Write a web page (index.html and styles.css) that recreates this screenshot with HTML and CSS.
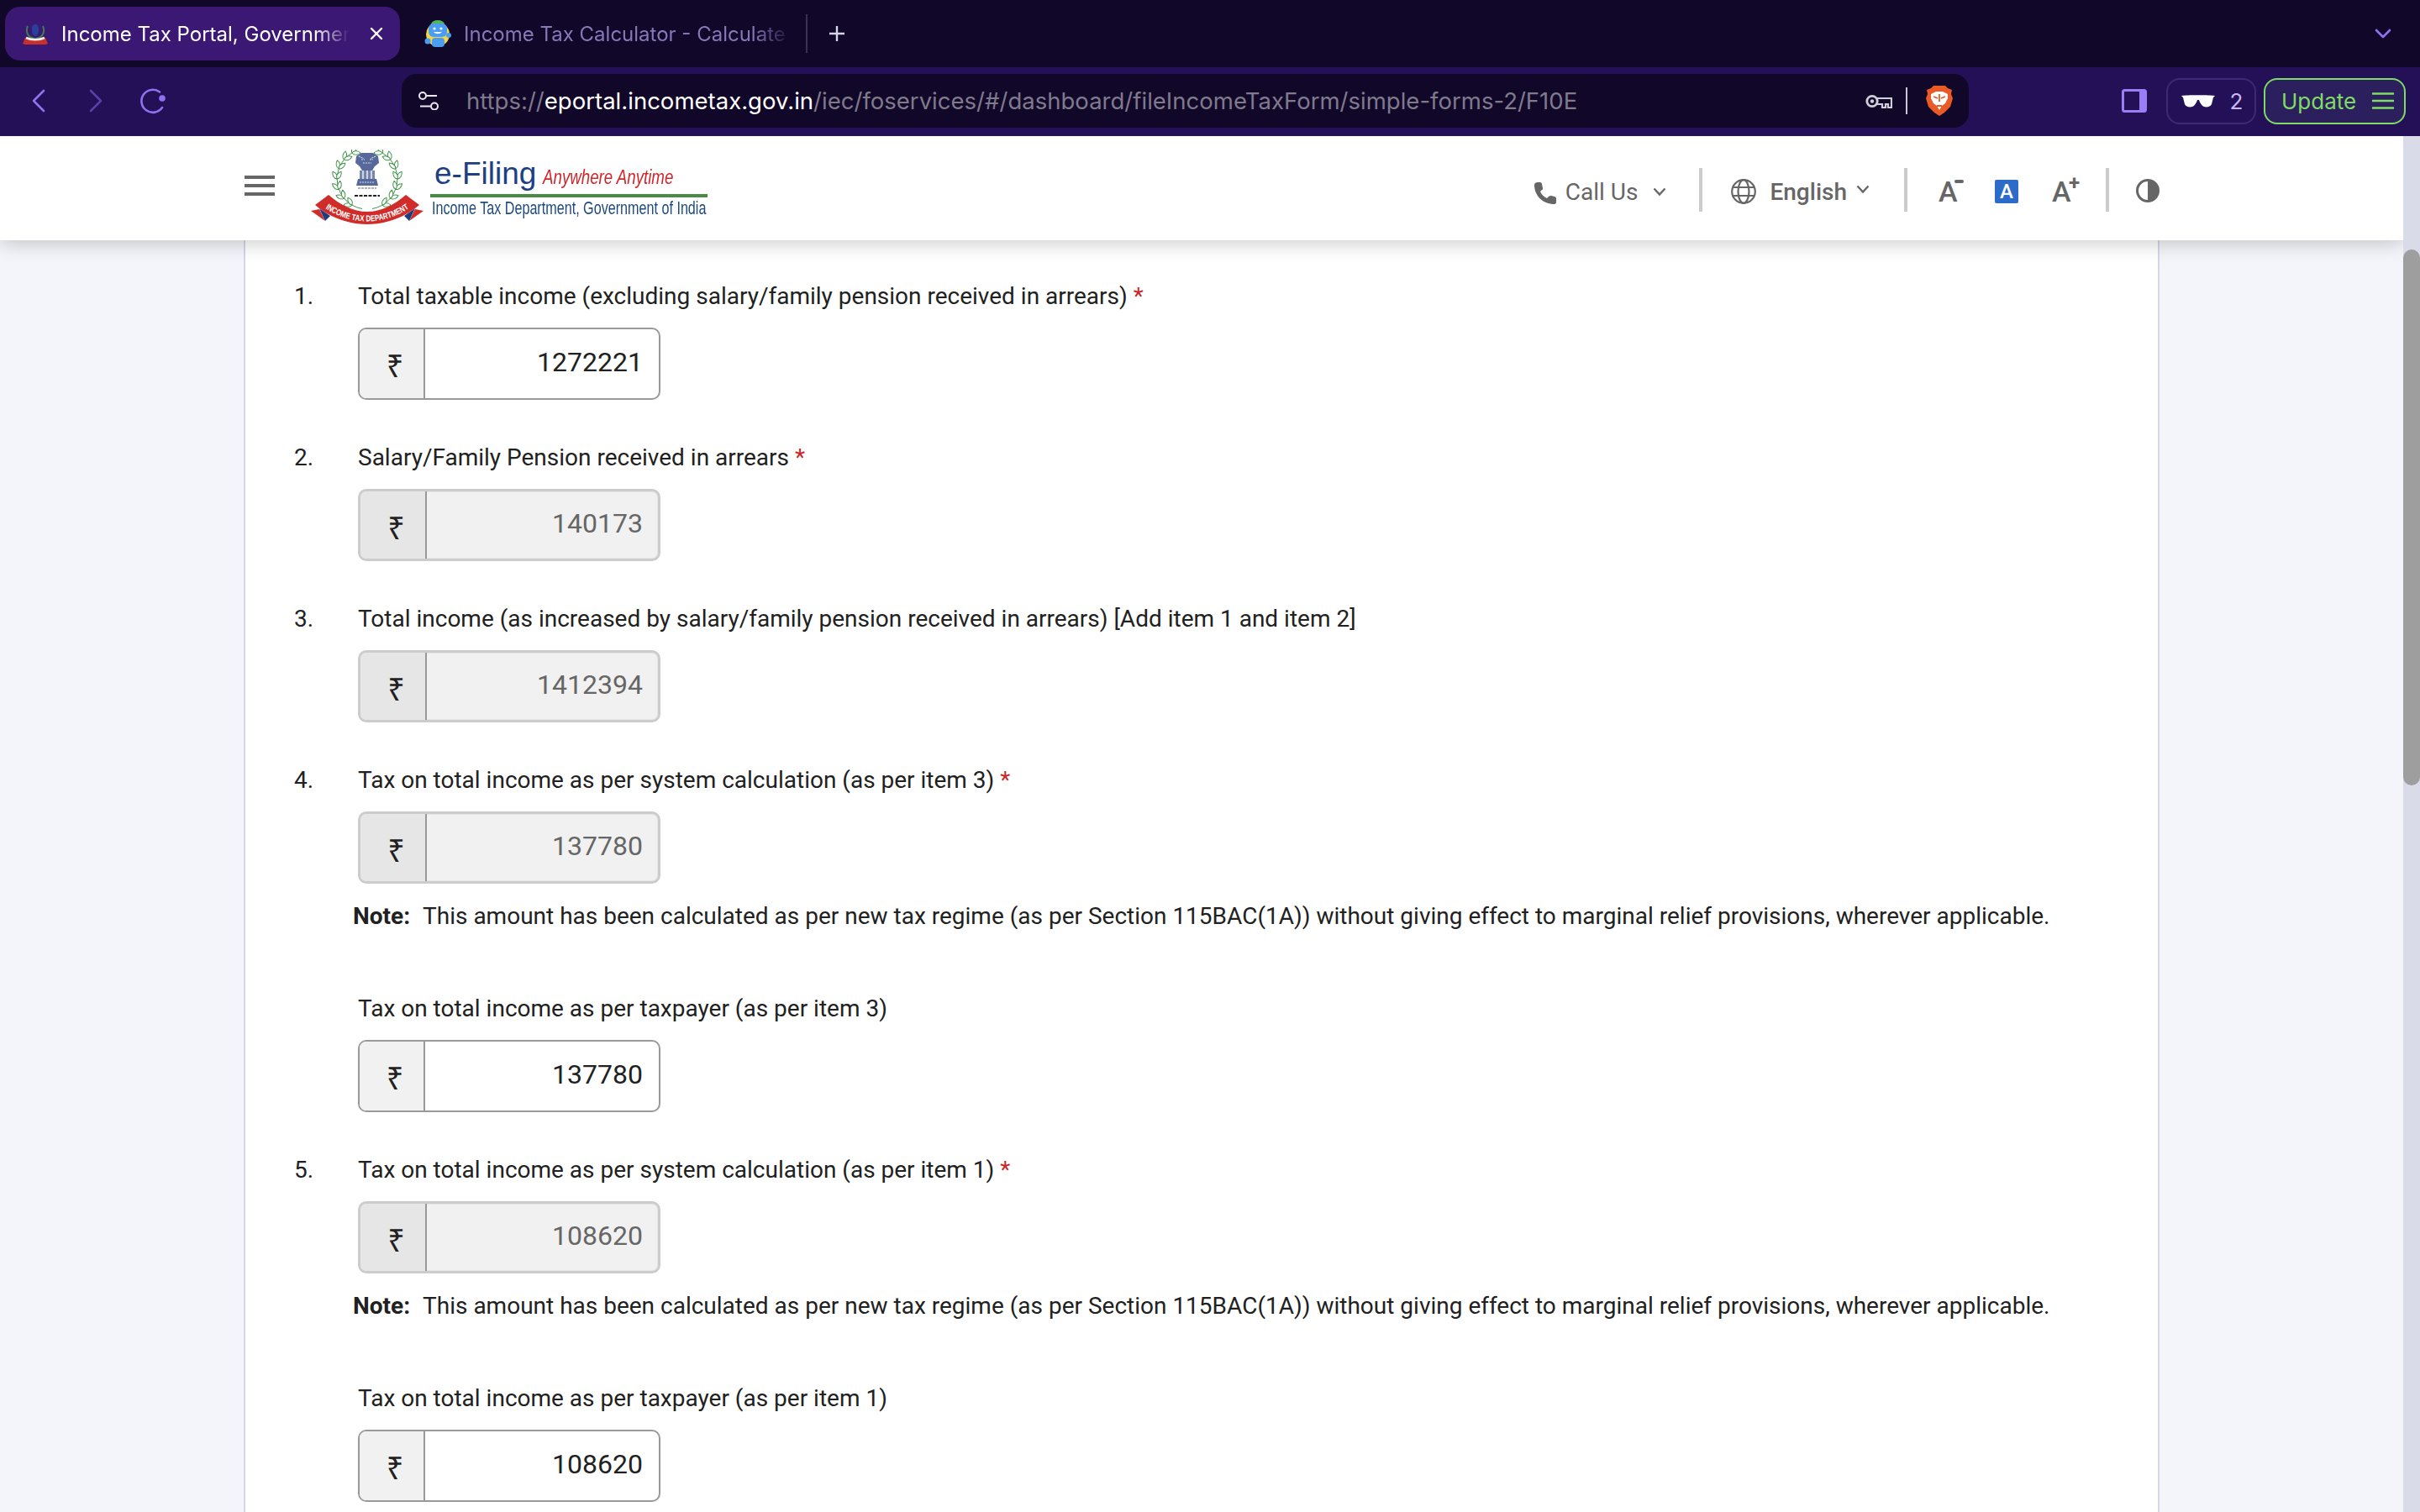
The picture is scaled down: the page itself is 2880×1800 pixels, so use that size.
FILE: index.html
```html
<!DOCTYPE html>
<html lang="en">
<head>
<meta charset="utf-8">
<title>Income Tax Portal</title>
<link rel="stylesheet" href="styles.css">
</head>
<body>
<div class="tabstrip">
  <div class="tab tab-active">
    <svg class="favicon" viewBox="0 0 30 25"><path d="M6 3C3 10 6 17 15 18c9-1 12-8 9-15" fill="none" stroke="#3d7d52" stroke-width="2"/><path d="M15 1c-3 0-4 2-4 6s1 8 4 8 4-4 4-8-1-6-4-6z" fill="#2a3f9a"/><path d="M3 17c6 4 18 4 24 0l3 7-3 1c-8 2-16 2-24 0l-3-1z" fill="#c8302c"/><path d="M4 17c6 3 16 3 22 0" stroke="#f4eeee" stroke-width="2.600" fill="none"/></svg>
    <span class="tab-title">Income Tax Portal, Government of India</span>
    <svg class="tab-close" viewBox="0 0 16 16"><path d="M2 2l12 12M14 2L2 14" stroke="#fff" stroke-width="2.400" stroke-linecap="round"/></svg>
  </div>
  <div class="tab tab-idle">
    <svg class="favicon favicon-robot" viewBox="0 0 32 32"><circle cx="16" cy="17" r="14" fill="#f3d54a"/><ellipse cx="16" cy="5" rx="8" ry="5" fill="#4cb85a"/><rect x="5" y="4" width="22" height="16" rx="6" fill="#4a9df0"/><circle cx="12" cy="10" r="1.600" fill="#fff"/><circle cx="20" cy="10" r="1.600" fill="#fff"/><path d="M11 14c3 3 7 3 10 0z" fill="#fff"/><rect x="9" y="21" width="15" height="11" rx="4" fill="#4a9df0"/><circle cx="4" cy="25" r="3.500" fill="#4a9df0"/><circle cx="29" cy="18" r="3" fill="#4a9df0"/></svg>
    <span class="tab-title">Income Tax Calculator - Calculate your tax</span>
  </div>
  <div class="tab-sep"></div>
  <svg class="tab-new" viewBox="0 0 20 20"><path d="M10 1v18M1 10h18" stroke="#d8d4ea" stroke-width="2.400"/></svg>
  <svg class="tab-more" viewBox="0 0 20 12"><path d="M2 2l8 8 8-8" fill="none" stroke="#8f72f0" stroke-width="2.600" stroke-linecap="round" stroke-linejoin="round"/></svg>
</div>

<div class="toolbar">
  <div class="nav-buttons">
    <svg class="nav-icon" viewBox="0 0 16 28"><path d="M14 2L2 14l12 12" fill="none" stroke="#8f72f0" stroke-width="2.600" stroke-linecap="round" stroke-linejoin="round"/></svg>
    <svg class="nav-icon nav-dim" viewBox="0 0 16 28"><path d="M2 2l12 12L2 26" fill="none" stroke="#5b3fa8" stroke-width="2.600" stroke-linecap="round" stroke-linejoin="round"/></svg>
    <svg class="nav-reload" viewBox="0 0 32 32"><path d="M24 5.500A13.500 13.500 0 1 0 27 24" fill="none" stroke="#8f72f0" stroke-width="2.600" stroke-linecap="round"/><circle cx="27" cy="13" r="3.800" fill="#8f72f0"/></svg>
  </div>
  <div class="urlbar">
    <svg class="url-tune" viewBox="0 0 24 22"><circle cx="5" cy="5" r="4" fill="none" stroke="#ece9f4" stroke-width="2"/><path d="M9.500 5H22M2 17.500h12" stroke="#ece9f4" stroke-width="2"/><circle cx="19" cy="17.500" r="4" fill="none" stroke="#ece9f4" stroke-width="2"/></svg>
    <div class="url-text"><span class="url-dim">https://</span><span class="url-host">eportal.incometax.gov.in</span><span class="url-dim">/iec/foservices/#/dashboard/fileIncomeTaxForm/simple-forms-2/F10E</span></div>
    <svg class="url-key" viewBox="0 0 32 17"><circle cx="8" cy="8.500" r="6.200" fill="none" stroke="#d0ced8" stroke-width="2.800"/><circle cx="8" cy="8.500" r="2.200" fill="#d0ced8"/><path d="M14 5h17v11h-4v-4h-3v4h-4v-4h-6" fill="none" stroke="#d0ced8" stroke-width="2.200"/></svg>
    <div class="url-sep"></div>
    <svg class="url-brave" viewBox="0 0 32 36"><path d="M9 0h14l3 3 5 2-1 5 2 5-3 10-7 7-6 4-6-4-7-7-3-10 2-5-1-5 5-2z" fill="#ea5a26"/><path d="M6 10l6-3h8l6 3 0 5-3 6-4 3-3 5-3-5-4-3-3-6z" fill="#fff"/><path d="M9 13l5 2M23 13l-5 2M16 10v9M13 24h6" stroke="#ea5a26" stroke-width="1.800" fill="none"/></svg>
  </div>
  <div class="toolbar-right">
    <svg class="side-icon" viewBox="0 0 30 28"><rect x="1.500" y="1.500" width="27" height="25" rx="2" fill="none" stroke="#9b7df5" stroke-width="3"/><rect x="21" y="2" width="8" height="24" fill="#9b7df5"/></svg>
    <div class="wallet-btn">
      <svg class="wallet-glasses" viewBox="0 0 40 15"><path d="M0 1C6 0 34 0 40 1l-2 2-2 8c-1 3-6 4-9 3-3-1-5-5-6-8h-2c-1 3-3 7-6 8-3 1-8 0-9-3L2 3z" fill="#fff"/></svg>
      <span class="wallet-count">2</span>
    </div>
    <div class="update-btn">
      <span class="update-text">Update</span>
      <svg class="update-menu" viewBox="0 0 26 20"><path d="M0 1.500h26M0 10h26M0 18.500h26" stroke="#7fdc62" stroke-width="2.400"/></svg>
    </div>
  </div>
</div>

<div class="viewport">
  <div class="page">
    <header class="site-header">
      <svg class="hamburger" viewBox="0 0 36 24"><path d="M0 2h36M0 12h36M0 22h36" stroke="#666" stroke-width="4"/></svg>
      <div class="logo">
        <svg class="logo-emblem" viewBox="10 8 134 92">
          <defs>
            <path id="leaf" d="M0 0c2-3 7-3 10 0-3 3-8 3-10 0z" fill="#fff" stroke="#3f9448" stroke-width="1"/>
            <g id="wreath">
              <path d="M59 12A36 36 0 0 0 71 78.500" fill="none" stroke="#3f9448" stroke-width="1"/>
              <use href="#leaf" transform="translate(59 12) rotate(-60)"/><use href="#leaf" transform="translate(59 12) rotate(0)"/>
              <use href="#leaf" transform="translate(49.400 19.900) rotate(-80)"/><use href="#leaf" transform="translate(49.400 19.900) rotate(-20)"/>
              <use href="#leaf" transform="translate(43.200 30.700) rotate(-100)"/><use href="#leaf" transform="translate(43.200 30.700) rotate(-40)"/>
              <use href="#leaf" transform="translate(41 43) rotate(-120)"/><use href="#leaf" transform="translate(41 43) rotate(-60)"/>
              <use href="#leaf" transform="translate(43.200 55.300) rotate(-140)"/><use href="#leaf" transform="translate(43.200 55.300) rotate(-80)"/>
              <use href="#leaf" transform="translate(49.400 66.100) rotate(-160)"/><use href="#leaf" transform="translate(49.400 66.100) rotate(-100)"/>
              <use href="#leaf" transform="translate(59 74) rotate(-180)"/><use href="#leaf" transform="translate(59 74) rotate(-120)"/>
            </g>
          </defs>
          <use href="#wreath"/>
          <use href="#wreath" transform="translate(154 0) scale(-1 1)"/>
          <path d="M70 12h14l6 4 1 8-5 4-3 5h-12l-3-5-5-4 1-8z" fill="#56699a"/>
          <path d="M68 33h18v10h-18z" fill="#7485ae"/>
          <path d="M72 33v10M77 33v10M82 33v10" stroke="#fff" stroke-width="1.300"/>
          <path d="M66 43h22l2 8H64z" fill="#56699a"/>
          <path d="M67 16l6 3M87 16l-6 3M72 24h10M70 20h4M80 20h4M68 47h18" stroke="#d5dbe9" stroke-width="1.100" stroke-dasharray="2 1"/>
          <path d="M66 54h22" stroke="#667" stroke-width="1.200" stroke-dasharray="3 1"/>
          <path d="M62 63h30" stroke="#222" stroke-width="2" stroke-dasharray="4 1.500"/>
          <path d="M10 81l10-2 7 14z" fill="#d02c2a"/><path d="M144 81l-10-2-7 14z" fill="#d02c2a"/>
          <path d="M20 78l13 9-6 6z" fill="#1f3d7c"/><path d="M134 78l-13 9 6 6z" fill="#1f3d7c"/>
          <path d="M31 62C45 74 60 82 77 82s32-8 46-20l16 12C120 90 98 97 77 97S34 90 15 74z" fill="#d02c2a"/>
          <path id="ribbonPath" d="M22 74C38 87 58 93.500 77 93.500S116 87 132 74" fill="none"/>
          <text class="logo-ribbon"><textPath href="#ribbonPath" startOffset="50%" text-anchor="middle" textLength="106" lengthAdjust="spacingAndGlyphs">INCOME TAX DEPARTMENT</textPath></text>
        </svg>
        <div class="logo-text">
          <div class="logo-top"><span class="logo-efiling">e-Filing</span><span class="logo-slogan">Anywhere Anytime</span></div>
          <div class="logo-rule"></div>
          <div class="logo-deptline"><span class="logo-dept">Income Tax Department, Government of India</span></div>
        </div>
      </div>
      <div class="header-tools">
        <div class="tool tool-call">
          <svg class="tool-phone" viewBox="0 0 27 26"><path d="M5 0h3c1 0 2 1 2 2l1 5c0 1 0 2-1 2L8 11c2 4 4 6 8 8l2-2c1-1 2-1 3-1l4 1c1 0 2 1 2 2v5c0 1-1 2-2 2C11 26 1 16 1 3c0-2 2-3 4-3z" fill="#666"/></svg>
          <span class="tool-label">Call Us</span>
          <svg class="tool-chev" viewBox="0 0 16 11"><path d="M1.500 1.500L8 8.500l6.500-7" fill="none" stroke="#666" stroke-width="2.400"/></svg>
        </div>
        <div class="tool-sep"></div>
        <div class="tool tool-lang">
          <svg class="tool-globe" viewBox="0 0 30 30"><g fill="none" stroke="#666" stroke-width="2.200"><circle cx="15" cy="15" r="13.800"/><ellipse cx="15" cy="15" rx="6.500" ry="13.800"/><path d="M2 10h26M2 20h26"/></g></svg>
          <span class="tool-label tool-strong">English</span>
          <svg class="tool-chev tool-chev-up" viewBox="0 0 16 11"><path d="M1.500 1.500L8 8.500l6.500-7" fill="none" stroke="#666" stroke-width="2.400"/></svg>
        </div>
        <div class="tool-sep"></div>
        <div class="tool tool-font">
          <div class="font-btn">A<i class="font-minus"></i></div>
          <div class="font-box">A</div>
          <div class="font-btn">A<i class="font-plus">+</i></div>
        </div>
        <div class="tool-sep"></div>
        <svg class="tool-contrast" viewBox="0 0 28 28"><circle cx="14" cy="14" r="12.500" fill="#fff" stroke="#666" stroke-width="3"/><path d="M14 2a12 12 0 0 1 0 24z" fill="#666"/></svg>
      </div>
    </header>
    <main class="card">
      <section class="item">
        <div class="item-row"><span class="item-num">1.</span><label class="item-label">Total taxable income (excluding salary/family pension received in arrears) <b class="req">*</b></label></div>
        <div class="amount"><span class="rupee">₹</span><span class="value">1272221</span></div>
      </section>
      <section class="item">
        <div class="item-row"><span class="item-num">2.</span><label class="item-label">Salary/Family Pension received in arrears <b class="req">*</b></label></div>
        <div class="amount amount-off"><span class="rupee">₹</span><span class="value">140173</span></div>
      </section>
      <section class="item">
        <div class="item-row"><span class="item-num">3.</span><label class="item-label">Total income (as increased by salary/family pension received in arrears) [Add item 1 and item 2]</label></div>
        <div class="amount amount-off"><span class="rupee">₹</span><span class="value">1412394</span></div>
      </section>
      <section class="item">
        <div class="item-row"><span class="item-num">4.</span><label class="item-label">Tax on total income as per system calculation (as per item 3) <b class="req">*</b></label></div>
        <div class="amount amount-off"><span class="rupee">₹</span><span class="value">137780</span></div>
        <p class="note"><strong class="note-tag">Note:</strong>This amount has been calculated as per new tax regime (as per Section 115BAC(1A)) without giving effect to marginal relief provisions, wherever applicable.</p>
        <div class="item-row item-sub"><label class="item-label">Tax on total income as per taxpayer (as per item 3)</label></div>
        <div class="amount"><span class="rupee">₹</span><span class="value">137780</span></div>
      </section>
      <section class="item">
        <div class="item-row"><span class="item-num">5.</span><label class="item-label">Tax on total income as per system calculation (as per item 1) <b class="req">*</b></label></div>
        <div class="amount amount-off"><span class="rupee">₹</span><span class="value">108620</span></div>
        <p class="note"><strong class="note-tag">Note:</strong>This amount has been calculated as per new tax regime (as per Section 115BAC(1A)) without giving effect to marginal relief provisions, wherever applicable.</p>
        <div class="item-row item-sub"><label class="item-label">Tax on total income as per taxpayer (as per item 1)</label></div>
        <div class="amount"><span class="rupee">₹</span><span class="value">108620</span></div>
      </section>
    </main>
  </div>
  <div class="scrollbar"><div class="scroll-thumb"></div></div>
</div>
</body>
</html>
```
FILE: styles.css
```css
* { box-sizing: border-box; }
html, body { margin: 0; height: 1800px; overflow: hidden; }
body { background: #f4f5fa; font-family: Roboto, sans-serif; display: flex; flex-direction: column; }

.tabstrip { height: 80px; flex: none; background: #110729; display: flex; align-items: center; padding-left: 6px; padding-right: 34px; font-family: Inter, sans-serif; }
.tab { height: 64px; display: flex; align-items: center; font-size: 24px; white-space: nowrap; flex: none; }
.tab-active { width: 470px; background: #3b1873; border-radius: 18px; color: #fff; padding: 0 20px 0 21px; gap: 16px; }
.tab-idle { width: 470px; color: #8579b8; padding: 0 3px 0 29px; gap: 15px; }
.favicon { width: 30px; height: 25px; flex: none; }
.favicon-robot { width: 32px; height: 32px; }
.tab-title { flex: 1; min-width: 0; overflow: hidden; -webkit-mask-image: linear-gradient(90deg, #000 88%, transparent); mask-image: linear-gradient(90deg, #000 88%, transparent); }
.tab-close { width: 16px; height: 16px; flex: none; margin-left: 8px; }
.tab-sep { width: 2px; height: 46px; background: #3b3357; margin-left: 13px; }
.tab-new { width: 20px; height: 20px; margin-left: 25px; }
.tab-more { width: 20px; height: 12px; margin-left: auto; }

.toolbar { height: 82px; flex: none; background: #231056; display: flex; align-items: center; font-family: Inter, sans-serif; padding-bottom: 2px; }
.nav-buttons { width: 478px; flex: none; display: flex; align-items: center; padding-left: 38px; }
.nav-icon { width: 16px; height: 28px; flex: none; }
.nav-dim { margin-left: 52px; }
.nav-reload { width: 32px; height: 32px; margin-left: 44px; flex: none; }
.urlbar { width: 1865px; height: 64px; flex: none; background: #110729; border-radius: 18px; display: flex; align-items: center; padding: 0 19px 0 20px; }
.url-tune { width: 24px; height: 22px; flex: none; }
.url-text { flex: 1; min-width: 0; margin-left: 33px; font-size: 27.540px; white-space: nowrap; overflow: hidden; }
.url-dim { color: #7f7a8c; }
.url-host { color: #fff; }
.url-key { width: 32px; height: 17px; flex: none; }
.url-sep { width: 2px; height: 32px; background: #c9c6d2; margin: 0 22px 0 16px; flex: none; }
.url-brave { width: 32px; height: 36px; flex: none; }
.toolbar-right { flex: 1; display: flex; align-items: center; padding-left: 182px; }
.side-icon { width: 30px; height: 28px; flex: none; }
.wallet-btn { width: 107px; height: 55px; flex: none; margin-left: 23px; border: 2px solid #3c2a78; border-radius: 16px; display: flex; align-items: center; justify-content: center; gap: 18px; padding-left: 2px; }
.wallet-glasses { width: 40px; height: 15px; flex: none; }
.wallet-count { color: #c8b8f6; font-size: 26px; }
.update-btn { width: 169px; height: 55px; flex: none; margin-left: 9px; border: 2px solid #7fdc62; border-radius: 16px; background: #2c1f5e; display: flex; align-items: center; justify-content: space-between; padding: 0 12px 0 19px; }
.update-text { color: #7fdc62; font-size: 26px; }
.update-menu { width: 26px; height: 20px; flex: none; }

.viewport { flex: 1; display: flex; min-height: 0; }
.page { flex: 1; min-width: 0; overflow: hidden; }
.scrollbar { width: 20px; flex: none; background: #d9dbe9; padding-top: 135px; }
.scroll-thumb { height: 638px; background: #9e9e9e; border-radius: 10px; }

.site-header { position: relative; z-index: 2; height: 124px; background: #fff; box-shadow: 0 4px 22px rgba(0,0,0,.2); display: flex; align-items: center; padding-left: 291px; }
.hamburger { width: 36px; height: 24px; flex: none; margin-bottom: 6px; }
.logo { display: flex; align-items: center; margin-left: 43px; }
.logo-emblem { width: 134px; height: 92px; flex: none; }
.logo-ribbon { font: 700 10px "Liberation Sans", sans-serif; fill: #fff; }
.logo-text { margin-left: 8px; width: 330px; height: 77px; flex: none; }
.logo-top { display: flex; align-items: baseline; height: 45px; white-space: nowrap; }
.logo-efiling { width: 134px; flex: none; padding-left: 5px; font: 37px/42px "Liberation Sans", sans-serif; color: #1c3f85; }
.logo-slogan { display: inline-block; font: italic 24px/42px "Liberation Sans", sans-serif; color: #d2262b; transform: scaleX(.780); transform-origin: 0 50%; }
.logo-rule { height: 4px; background: #4a8c46; }
.logo-deptline { height: 28px; white-space: nowrap; padding-left: 2px; }
.logo-dept { display: inline-block; font: 22px/25px "Liberation Sans", sans-serif; color: #1e4a80; transform: scaleX(.734); transform-origin: 0 50%; }

.header-tools { margin-left: auto; display: flex; align-items: center; margin-right: 290px; margin-top: 4px; color: #666; }
.tool { display: flex; align-items: center; margin-top: 4px; flex: none; }
.tool-label { font-size: 28px; margin-left: 11px; color: #666; }
.tool-strong { font-weight: 500; margin-left: 16px; }
.tool-phone { width: 27px; height: 26px; margin-top: 4px; flex: none; }
.tool-chev { width: 16px; height: 11px; margin-left: 18px; flex: none; }
.tool-chev-up { width: 18px; margin-left: 10px; margin-bottom: 5px; }
.tool-sep { width: 4px; height: 52px; background: #ccc; flex: none; }
.tool-call { margin-right: 39px; }
.tool-lang { margin: 4px 40px 0 34px; }
.tool-globe { width: 30px; height: 30px; flex: none; }
.tool-font { margin: 4px 34px 0 37px; }
.font-btn { position: relative; width: 30px; font-size: 34px; color: #666; font-weight: 500; line-height: 30px; }
.font-minus { position: absolute; right: 0; top: 1px; width: 11px; height: 4px; background: #666; border-radius: 2px; }
.font-plus { position: absolute; right: -3px; top: -5px; font: 700 24px/20px Roboto, sans-serif; }
.font-box { width: 28px; height: 28px; margin: 0 40px 0 37px; background: #2d6bc9; color: #fff; border-radius: 2px; font-size: 24px; font-weight: 500; line-height: 28px; text-align: center; }
.tool-contrast { width: 28px; height: 28px; margin: 2px 0 0 32px; flex: none; }

.card { width: 2280px; height: 1514px; margin-left: 290px; background: #fff; border-left: 2px solid #d5d6e6; border-right: 2px solid #d5d6e6; padding: 48px 0 0 58px; color: #212121; }
.item { margin-bottom: 50px; }
.item-row { display: flex; height: 38px; align-items: center; font-size: 28px; line-height: 38px; white-space: nowrap; }
.item-num { width: 76px; flex: none; }
.item-sub { padding-left: 76px; }
.req { color: #c62828; font-weight: 400; }
.amount { width: 360px; height: 86px; margin: 18px 0 0 76px; border: 2px solid #999; border-radius: 10px; background: #fff; display: flex; align-items: center; overflow: hidden; }
.rupee { width: 78px; height: 100%; flex: none; background: #f1f1f1; border-right: 2px solid #999; font: 36px/88px "Noto Sans", Roboto, sans-serif; text-align: center; padding-left: 8px; }
.value { flex: 1; text-align: right; font-size: 32px; padding-right: 19px; margin-bottom: 5px; }
.amount-off { border: 3px solid #ccc; background: #f1f1f1; box-shadow: inset 0 0 0 1px #e6e6e6; }
.amount-off .rupee { width: 79px; background: #e6e6e6; border-right-color: #999; }
.amount-off .value { color: #666; padding-right: 18px; }
.note { margin: 20px 0 0 70px; font-size: 28px; line-height: 38px; white-space: nowrap; height: 38px; }
.note-tag { font-weight: 700; margin-right: 15px; }
.note + .item-row { margin-top: 72px; }
```
